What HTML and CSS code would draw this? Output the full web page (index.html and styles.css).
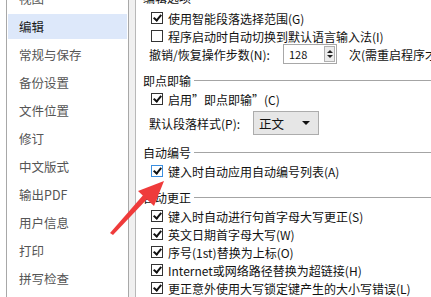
FILE: index.html
```html
<!DOCTYPE html>
<html lang="zh-CN">
<head>
<meta charset="UTF-8">
<title>选项</title>
<link rel="stylesheet" href="styles.css">
</head>
<body>

<div class="dialog">
    <ul class="nav">
        <li>视图</li>
        <li class="active">编辑</li>
        <li>常规与保存</li>
        <li>备份设置</li>
        <li>文件位置</li>
        <li>修订</li>
        <li>中文版式</li>
        <li>输出PDF</li>
        <li>用户信息</li>
        <li>打印</li>
        <li>拼写检查</li>
    </ul>
    <div class="splitter"></div>

    <div class="pane">
        <div class="group-title first"><span>编辑选项</span><i></i></div>
        <div class="row check"><span class="box on"></span>使用智能段落选择范围(G)</div>
        <div class="row check"><span class="box"></span>程序启动时自动切换到默认语言输入法(I)</div>
        <div class="row plain">
            <span class="label spin-label">撤销/恢复操作步数(N):</span>
            <span class="spin"><span class="spin-val">128</span><span class="spin-btn"><b class="up"></b><b class="down"></b></span></span>
            <span class="after">次(需重启程序才能生效)</span>
        </div>

        <div class="group-title"><span>即点即输</span><i></i></div>
        <div class="row check"><span class="box on"></span>启用”即点即输”(C)</div>
        <div class="row plain combo-row">
            <span class="label combo-label">默认段落样式(P):</span>
            <span class="combo">正文<b></b></span>
        </div>

        <div class="group-title"><span>自动编号</span><i></i></div>
        <div class="row check"><span class="box on hover"></span>键入时自动应用自动编号列表(A)</div>

        <div class="group-title"><span>自动更正</span><i></i></div>
        <div class="row check"><span class="box on"></span>键入时自动进行句首字母大写更正(S)</div>
        <div class="row check"><span class="box on"></span>英文日期首字母大写(W)</div>
        <div class="row check"><span class="box on"></span>序号(1st)替换为上标(O)</div>
        <div class="row check"><span class="box on"></span>Internet或网络路径替换为超链接(H)</div>
        <div class="row check"><span class="box on"></span>更正意外使用大写锁定键产生的大小写错误(L)</div>
    </div>

    <!-- annotation arrow drawn over the dialog -->
    <svg class="arrow" width="431" height="297" viewBox="0 0 431 297">
        <polygon points="110,233 113,235 149,197 145,193" fill="#ef3b3b"/>
        <polygon points="164,181 138,191 154,206" fill="#ef3b3b"/>
    </svg>
</div>

</body>
</html>
```

FILE: styles.css
```css
body {
    margin: 0;
    background-color: #fff;
    font-family: "Noto Sans CJK SC", "Noto Sans", sans-serif;
    font-size: 12px;
    color: #111;
    overflow: hidden;
}

.dialog {
    display: flex;
    width: 431px;
    height: 297px;
    overflow: hidden;
    position: relative;
}

/* left category list */
.nav {
    list-style: none;
    margin: 0 0 0 6px;
    padding: 0 1px;
    width: 119px;
    flex-shrink: 0;
    border-left: 1px solid #a8a8a8;
    border-right: 1px solid #a8a8a8;
    background-color: #fff;
}

.nav li {
    height: 25px;
    line-height: 25px;
    margin-bottom: 3px;
    padding-left: 11px;
    font-size: 12.5px;
    color: #555;
    white-space: nowrap;
}

.nav li:first-child {
    margin-top: -14px;
}

.nav li.active {
    background-color: #dde8fa;
    color: #1a1a1a;
}

.splitter {
    width: 6px;
    flex-shrink: 0;
    background-color: #f0f0f0;
    border-right: 1px solid #b8b8b8;
}

/* right options pane */
.pane {
    flex: 1;
    min-width: 0;
    padding-left: 7px;
    margin-top: -11px;
    white-space: nowrap;
    overflow: hidden;
}

.group-title {
    display: flex;
    align-items: center;
    height: 16px;
    margin-top: 9px;
}

.group-title.first {
    margin-top: 0;
    margin-bottom: 4px;
}

.group-title i {
    flex: 1;
    height: 1px;
    margin-left: 3px;
    background-color: #a4a4a4;
}

.row {
    display: flex;
    align-items: center;
    height: 18px;
}

.check {
    padding-left: 8px;
}

.plain {
    padding-left: 6px;
}

.group-title + .row {
    margin-top: 2px;
}

.label {
    flex-shrink: 0;
}

.spin-label {
    width: 134px;
}

.combo-label {
    width: 104px;
}

.box {
    width: 10px;
    height: 10px;
    border: 1px solid #333;
    background-color: #fff;
    margin-right: 5px;
    flex-shrink: 0;
    position: relative;
}

.box.on::after {
    content: "";
    position: absolute;
    left: 1px;
    top: 0;
    width: 3px;
    height: 6px;
    border-right: 2px solid #111;
    border-bottom: 2px solid #111;
    transform: translate(2px, 0) rotate(40deg);
}

.box.hover {
    border-color: #3c8fe0;
}

.spin {
    display: flex;
    flex-shrink: 0;
    width: 52px;
    height: 18px;
    border: 1px solid #a8a8a8;
    background-color: #fff;
}

.spin-val {
    flex: 1;
    padding-left: 5px;
    line-height: 18px;
    font-size: 11px;
}

.spin-btn {
    width: 9px;
    margin: 1px;
    border: 1px solid #b0b0b0;
    background-color: #ececec;
    display: flex;
    flex-direction: column;
    justify-content: center;
    align-items: center;
    gap: 2px;
}

.spin-btn b {
    width: 0;
    height: 0;
    border-left: 3px solid transparent;
    border-right: 3px solid transparent;
}

.spin-btn .up {
    border-bottom: 3px solid #222;
}

.spin-btn .down {
    border-top: 3px solid #222;
}

.after {
    margin-left: 12px;
}

.combo-row {
    height: 24px;
    margin-top: 3px;
}

.combo {
    display: flex;
    flex-shrink: 0;
    align-items: center;
    justify-content: space-between;
    width: 59px;
    height: 22px;
    padding-left: 5px;
    border: 1px solid #acacac;
    background-color: #e6e6e6;
    font-size: 12.5px;
}

.combo b {
    width: 0;
    height: 0;
    margin-right: 8px;
    border-left: 4px solid transparent;
    border-right: 4px solid transparent;
    border-top: 4px solid #111;
}

.arrow {
    position: absolute;
    left: 0;
    top: 0;
    pointer-events: none;
}
```
